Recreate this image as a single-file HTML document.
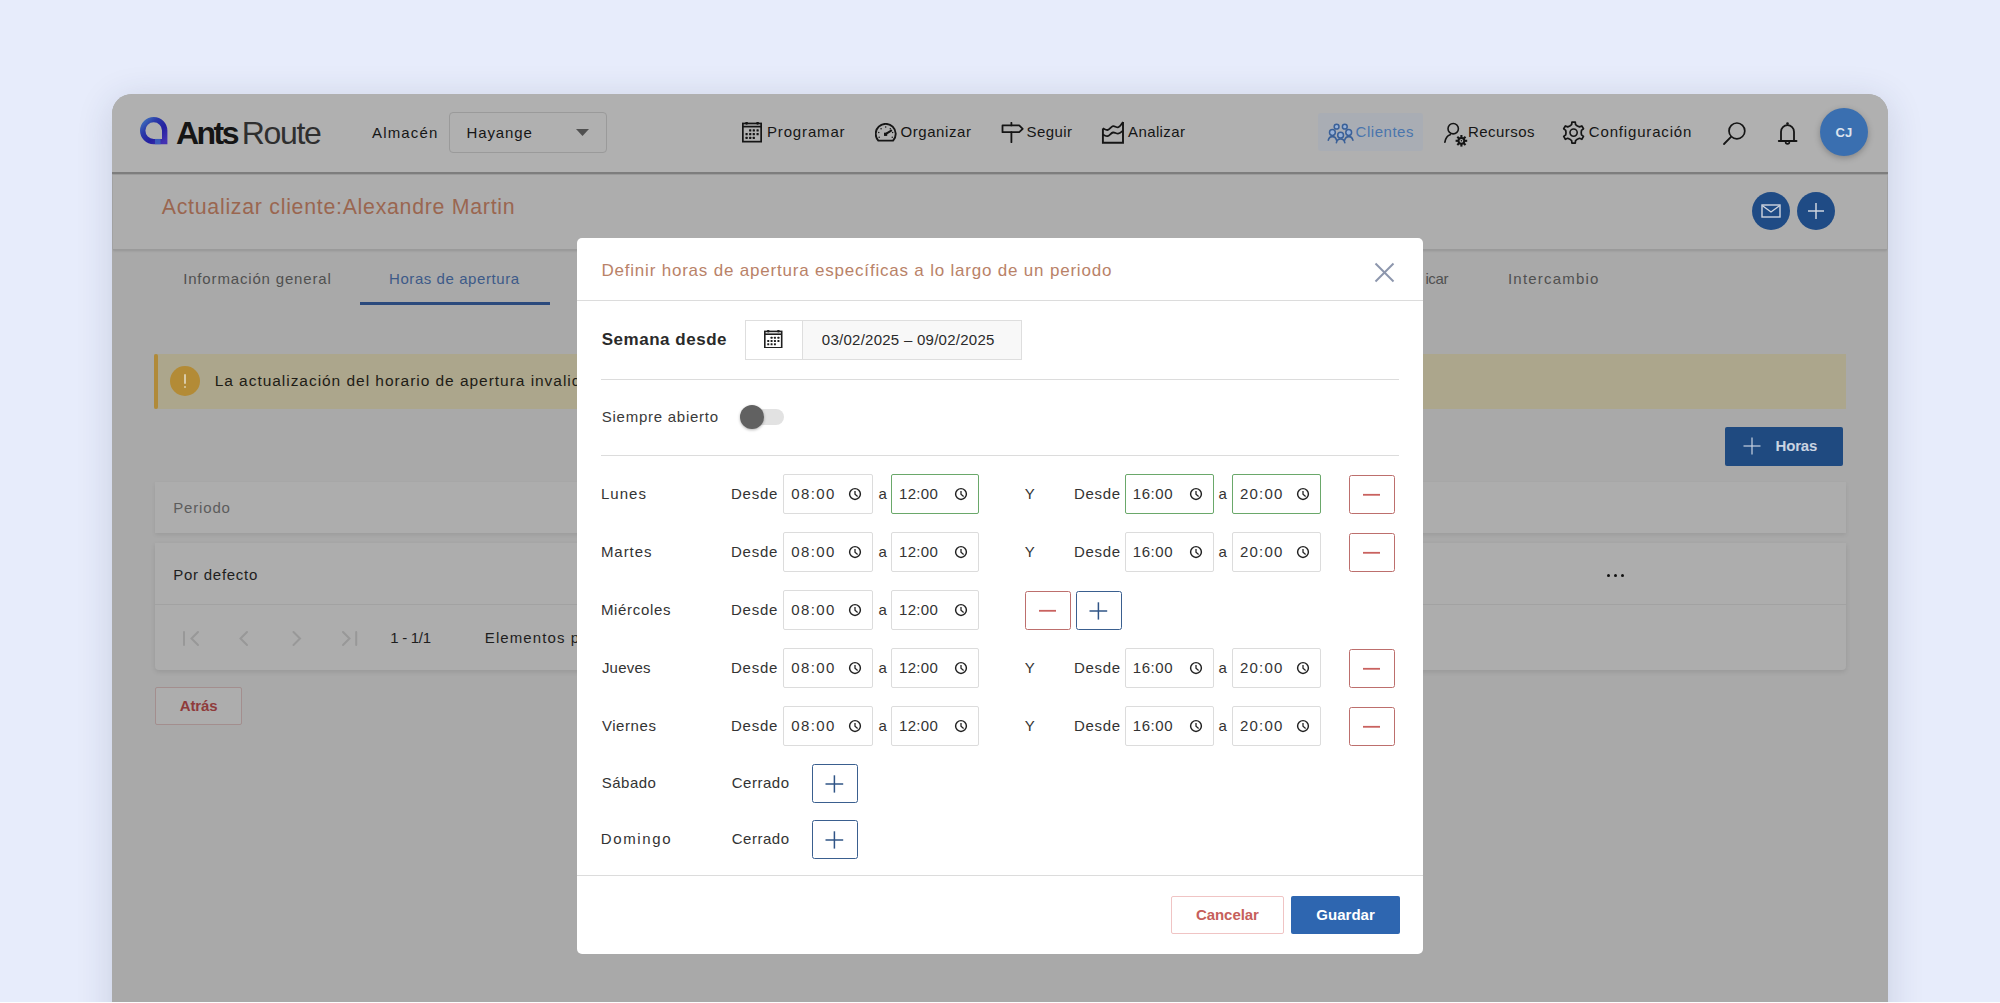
<!DOCTYPE html>
<html><head><meta charset="utf-8"><style>
html,body{margin:0;padding:0;}
body{width:2000px;height:1003px;overflow:hidden;position:relative;background:#e7ecfb;font-family:"Liberation Sans", sans-serif;}
.t{position:absolute;white-space:nowrap;line-height:1;}
.b{position:absolute;box-sizing:border-box;}
</style></head><body>
<div class="b" style="left:112px;top:94px;width:1776px;height:960px;border-radius:20px;background:#a9a9a9;box-shadow:0 6px 36px rgba(40,50,90,0.16);overflow:hidden">
<div class="b" style="left:0px;top:0px;width:1776px;height:78px;background:#b0b0b0"></div>
<div class="b" style="left:0px;top:78px;width:1776px;height:2px;background:#7d7d7d"></div>
<div class="b" style="left:0px;top:80px;width:1776px;height:1px;background:#9d9d9d"></div>
<div class="b" style="left:1px;top:81px;width:1774px;height:75px;background:#adadad;border-bottom:1px solid #9a9a9a;box-shadow:0 1px 2px rgba(0,0,0,0.12)"></div>
</div>
<svg class="b" style="left:138px;top:115px;" width="32" height="32" viewBox="0 0 32 32" fill="none"><defs><linearGradient id="lg" x1="0" y1="0" x2="1" y2="1"><stop offset="0" stop-color="#3f74bd"/><stop offset="0.3" stop-color="#2b3ba9"/><stop offset="0.65" stop-color="#2420a0"/><stop offset="1" stop-color="#4432b2"/></linearGradient></defs><path d="M4.7 15.6 A11 11 0 0 1 26.7 15.6 V26.6 H15.7 A11 11 0 0 1 4.7 15.6 Z" stroke="url(#lg)" stroke-width="5.4" stroke-linejoin="miter"/><path d="M17 26.6 H22.5" stroke="#3f6fc0" stroke-width="5.4" opacity="0.7"/></svg>
<div class="t" style="left:176.00px;top:117.41px;font-size:32px;font-weight:700;color:#151515;letter-spacing:-2.538px;">Ants</div>
<div class="t" style="left:241.70px;top:117.41px;font-size:32px;font-weight:400;color:#2f2f2f;letter-spacing:-1.323px;">Route</div>
<div class="t" style="left:372.00px;top:124.80px;font-size:15px;font-weight:400;color:#161616;letter-spacing:1.164px;">Almacén</div>
<div class="b" style="left:449px;top:112px;width:158px;height:41px;border:1px solid #9a9a9a;border-radius:4px;background:#b0b0b0"></div>
<div class="t" style="left:466.50px;top:124.80px;font-size:15px;font-weight:400;color:#161616;letter-spacing:0.900px;">Hayange</div>
<svg class="b" style="left:576px;top:129px;" width="13" height="8" viewBox="0 0 13 8" fill="none"><path d="M0 0 H13 L6.5 7 Z" fill="#505050"/></svg>
<svg class="b" style="left:742.3px;top:122.3px;" width="20" height="20.5" viewBox="0 0 20 20.5" fill="none"><rect x="0.85" y="1.45" width="18.30" height="18.20" stroke="#151515" stroke-width="1.7" fill="none"/><line x1="0.85" y1="4.61" x2="19.15" y2="4.61" stroke="#151515" stroke-width="1.7"/><circle cx="4.60" cy="1.25" r="1.44" fill="#151515"/><circle cx="15.60" cy="1.25" r="1.44" fill="#151515"/><rect x="7.10" y="7.30" width="2.20" height="2.20" rx="0.5" fill="#151515"/><rect x="10.70" y="7.30" width="2.20" height="2.20" rx="0.5" fill="#151515"/><rect x="14.50" y="7.30" width="2.20" height="2.20" rx="0.5" fill="#151515"/><rect x="3.50" y="10.99" width="2.20" height="2.20" rx="0.5" fill="#151515"/><rect x="7.10" y="10.99" width="2.20" height="2.20" rx="0.5" fill="#151515"/><rect x="10.70" y="10.99" width="2.20" height="2.20" rx="0.5" fill="#151515"/><rect x="14.50" y="10.99" width="2.20" height="2.20" rx="0.5" fill="#151515"/><rect x="3.50" y="14.69" width="2.20" height="2.20" rx="0.5" fill="#151515"/><rect x="7.10" y="14.69" width="2.20" height="2.20" rx="0.5" fill="#151515"/><rect x="10.70" y="14.69" width="2.20" height="2.20" rx="0.5" fill="#151515"/></svg>
<div class="t" style="left:767.00px;top:124.40px;font-size:15px;font-weight:400;color:#161616;letter-spacing:0.843px;">Programar</div>
<svg class="b" style="left:874.5px;top:123px;" width="22" height="20" viewBox="0 0 22 20" fill="none"><path d="M3.3 17.6 A10 10 0 1 1 18.1 17.6 Z" stroke="#151515" stroke-width="1.9" stroke-linejoin="round" fill="none"/><line x1="10.5" y1="11.2" x2="16.2" y2="7.6" stroke="#151515" stroke-width="2" stroke-linecap="round"/><rect x="9" y="9.7" width="3.2" height="3.2" fill="#151515"/><circle cx="4.17" cy="14.34" r="0.75" fill="#151515"/><circle cx="3.75" cy="9.44" r="0.75" fill="#151515"/><circle cx="6.07" cy="5.78" r="0.75" fill="#151515"/><circle cx="10.70" cy="4.10" r="0.75" fill="#151515"/><circle cx="15.33" cy="5.78" r="0.75" fill="#151515"/><circle cx="17.65" cy="9.44" r="0.75" fill="#151515"/><circle cx="17.23" cy="14.34" r="0.75" fill="#151515"/></svg>
<div class="t" style="left:900.40px;top:124.40px;font-size:15px;font-weight:400;color:#161616;letter-spacing:0.592px;">Organizar</div>
<svg class="b" style="left:1001px;top:122px;" width="23" height="21" viewBox="0 0 23 21" fill="none"><path d="M1.5 3.4 H18.2 L21.7 6.8 L18.2 10.2 H1.5 Z" stroke="#151515" stroke-width="1.8" stroke-linejoin="round" fill="none"/><line x1="10.4" y1="0.8" x2="10.4" y2="3.4" stroke="#151515" stroke-width="1.8" stroke-linecap="round"/><line x1="10.4" y1="10.2" x2="10.4" y2="20.2" stroke="#151515" stroke-width="1.8" stroke-linecap="round"/></svg>
<div class="t" style="left:1026.60px;top:124.40px;font-size:15px;font-weight:400;color:#161616;letter-spacing:0.407px;">Seguir</div>
<svg class="b" style="left:1101px;top:121px;" width="24" height="23" viewBox="0 0 24 23" fill="none"><path d="M1.9 7.4 V21.8 H22 V1" stroke="#151515" stroke-width="1.9" stroke-linejoin="miter" fill="none"/><path d="M1.9 7.4 C4 8.4 5 9.2 6.5 9 C8.5 8.7 10 5.5 12 5.2 C14 5 15 6.4 17 6.3 C19 6.2 20.5 3 22 1" stroke="#151515" stroke-width="1.8" fill="none"/><path d="M1.9 13.6 C4 14.6 5 15.4 6.5 15.2 C8.5 14.9 10 11.8 12 11.5 C14 11.3 15 12.7 17 12.6 C19 12.5 20.5 10.8 22 9.6" stroke="#151515" stroke-width="1.8" fill="none"/></svg>
<div class="t" style="left:1128.00px;top:124.40px;font-size:15px;font-weight:400;color:#161616;letter-spacing:0.400px;">Analizar</div>
<div class="b" style="left:1318px;top:113px;width:105px;height:38px;background:#a9adb4;border-radius:3px"></div>
<svg class="b" style="left:1326px;top:122px;" width="29" height="22" viewBox="0 0 29 22" fill="none"><path d="M2.30 18.20 C3.30 13.40 9.50 13.40 10.50 18.20" stroke="#3a6098" stroke-width="1.6" fill="none" stroke-linecap="round"/><path d="M18.70 18.20 C19.70 13.40 25.90 13.40 26.90 18.20" stroke="#3a6098" stroke-width="1.6" fill="none" stroke-linecap="round"/><path d="M10.40 20.60 C11.40 15.80 17.80 15.80 18.80 20.60" stroke="#3a6098" stroke-width="1.6" fill="none" stroke-linecap="round"/><circle cx="10.60" cy="4.70" r="2.40" stroke="#3a6098" stroke-width="1.5" fill="#98b2d8"/><circle cx="18.80" cy="4.70" r="2.40" stroke="#3a6098" stroke-width="1.5" fill="#98b2d8"/><circle cx="6.40" cy="10.50" r="2.90" stroke="#3a6098" stroke-width="1.5" fill="#98b2d8"/><circle cx="22.70" cy="10.50" r="2.90" stroke="#3a6098" stroke-width="1.5" fill="#98b2d8"/><circle cx="14.60" cy="13.20" r="2.90" stroke="#3a6098" stroke-width="1.5" fill="#98b2d8"/></svg>
<div class="t" style="left:1355.60px;top:124.40px;font-size:15px;font-weight:400;color:#4a75ad;letter-spacing:0.530px;">Clientes</div>
<svg class="b" style="left:1444px;top:122px;" width="25" height="26" viewBox="0 0 25 26" fill="none"><circle cx="9.2" cy="6.7" r="5.2" stroke="#151515" stroke-width="1.6" fill="none"/><path d="M6.2 12.7 C3 13.5 1.5 16.5 0.9 20.2" stroke="#151515" stroke-width="1.7" fill="none" stroke-linecap="round"/><g stroke="#151515" stroke-width="2.1"><line x1="20.40" y1="18.80" x2="23.20" y2="18.80"/><line x1="19.52" y1="20.92" x2="21.50" y2="22.90"/><line x1="17.40" y1="21.80" x2="17.40" y2="24.60"/><line x1="15.28" y1="20.92" x2="13.30" y2="22.90"/><line x1="14.40" y1="18.80" x2="11.60" y2="18.80"/><line x1="15.28" y1="16.68" x2="13.30" y2="14.70"/><line x1="17.40" y1="15.80" x2="17.40" y2="13.00"/><line x1="19.52" y1="16.68" x2="21.50" y2="14.70"/></g><circle cx="17.40" cy="18.80" r="2.9" stroke="#151515" stroke-width="2" fill="none"/><circle cx="17.40" cy="18.80" r="0.8" fill="#151515"/></svg>
<div class="t" style="left:1468.00px;top:124.40px;font-size:15px;font-weight:400;color:#161616;letter-spacing:0.449px;">Recursos</div>
<svg class="b" style="left:1562px;top:121px;" width="24" height="24" viewBox="0 0 24 24" fill="none"><path d="M7.80 5.02 L9.62 3.64 L9.94 1.13 L13.26 1.13 L13.58 3.64 L15.40 5.02 L17.50 5.90 L19.84 4.93 L21.50 7.80 L19.48 9.34 L19.20 11.60 L19.48 13.86 L21.50 15.40 L19.84 18.27 L17.50 17.30 L15.40 18.18 L13.58 19.56 L13.26 22.07 L9.94 22.07 L9.62 19.56 L7.80 18.18 L5.70 17.30 L3.36 18.27 L1.70 15.40 L3.72 13.86 L4.00 11.60 L3.72 9.34 L1.70 7.80 L3.36 4.93 L5.70 5.90 Z" stroke="#151515" stroke-width="1.7" stroke-linejoin="round" fill="none"/><circle cx="11.60" cy="11.60" r="3.6" stroke="#151515" stroke-width="1.6" fill="none"/></svg>
<div class="t" style="left:1588.80px;top:124.40px;font-size:15px;font-weight:400;color:#161616;letter-spacing:0.832px;">Configuración</div>
<svg class="b" style="left:1722px;top:121px;" width="26" height="26" viewBox="0 0 26 26" fill="none"><circle cx="14.9" cy="9.9" r="7.9" stroke="#151515" stroke-width="1.7" fill="none"/><line x1="9" y1="15.8" x2="2" y2="23" stroke="#151515" stroke-width="1.8" stroke-linecap="round"/></svg>
<svg class="b" style="left:1777px;top:121px;" width="22" height="25" viewBox="0 0 22 25" fill="none"><path d="M4 20 V10.7 A6.5 6.5 0 0 1 17 10.7 V20" stroke="#151515" stroke-width="1.8" fill="none"/><line x1="1.8" y1="20" x2="19.5" y2="20" stroke="#151515" stroke-width="1.9" stroke-linecap="round"/><circle cx="10.5" cy="2.6" r="1.3" fill="#151515"/><path d="M8.6 21 A1.9 1.9 0 0 0 12.4 21" stroke="#151515" stroke-width="1.6" fill="none"/></svg>
<div class="b" style="left:1820px;top:108px;width:48px;height:48px;border-radius:50%;background:#3a6fb0;box-shadow:0 2px 6px rgba(0,0,0,0.25)"></div>
<div class="t" style="left:1835.50px;top:125.50px;font-size:13px;font-weight:700;color:#dde4ee;letter-spacing:0.112px;">CJ</div>
<div class="t" style="left:161.80px;top:196.77px;font-size:21.3px;font-weight:400;color:#9a6650;letter-spacing:0.734px;">Actualizar cliente:Alexandre Martin</div>
<div class="b" style="left:1752px;top:192px;width:38px;height:38px;border-radius:50%;background:#1f4b85"></div>
<svg class="b" style="left:1761px;top:204px;" width="20" height="14" viewBox="0 0 20 14" fill="none"><rect x="1" y="1" width="18" height="12" stroke="#cfd5df" stroke-width="1.4" fill="none"/><path d="M1.5 1.8 L10 8 L18.5 1.8" stroke="#cfd5df" stroke-width="1.4" fill="none"/></svg>
<div class="b" style="left:1797px;top:192px;width:38px;height:38px;border-radius:50%;background:#1f4b85"></div>
<svg class="b" style="left:1806px;top:201px;" width="20" height="20" viewBox="0 0 20 20" fill="none"><line x1="10" y1="2" x2="10" y2="18" stroke="#cfd5df" stroke-width="1.5"/><line x1="2" y1="10" x2="18" y2="10" stroke="#cfd5df" stroke-width="1.5"/></svg>
<div class="t" style="left:183.20px;top:271.00px;font-size:15px;font-weight:400;color:#505050;letter-spacing:0.836px;">Información general</div>
<div class="t" style="left:389.00px;top:271.00px;font-size:15px;font-weight:400;color:#3d5a88;letter-spacing:0.571px;">Horas de apertura</div>
<div class="b" style="left:360px;top:302px;width:190px;height:3px;background:#2b4a7d"></div>
<div class="t" style="left:1425.40px;top:271.00px;font-size:15px;font-weight:400;color:#505050;letter-spacing:-0.358px;">icar</div>
<div class="t" style="left:1508.00px;top:271.00px;font-size:15px;font-weight:400;color:#505050;letter-spacing:1.197px;">Intercambio</div>
<div class="b" style="left:154px;top:354px;width:1692px;height:55px;background:#aca68c"></div>
<div class="b" style="left:154px;top:353.5px;width:4.3px;height:55.5px;background:#b08a3a;border-radius:2px"></div>
<div class="b" style="left:170px;top:366px;width:30px;height:30px;border-radius:50%;background:#b38b36"></div>
<div class="b" style="left:183.8px;top:373.8px;width:2.6px;height:10px;background:#d9cba8;border-radius:1.2px"></div>
<div class="b" style="left:183.9px;top:385.8px;width:2.4px;height:2.4px;background:#d9cba8;border-radius:1px"></div>
<div class="t" style="left:214.70px;top:372.58px;font-size:15.5px;font-weight:400;color:#1e1c16;letter-spacing:0.960px;">La actualización del horario de apertura invalida</div>
<div class="b" style="left:1725px;top:427px;width:118px;height:39px;background:#1f4a80;border-radius:2px"></div>
<svg class="b" style="left:1742px;top:436px;" width="20" height="20" viewBox="0 0 20 20" fill="none"><line x1="10" y1="1.5" x2="10" y2="18.5" stroke="#c9d3e1" stroke-width="1.2"/><line x1="1.5" y1="10" x2="18.5" y2="10" stroke="#c9d3e1" stroke-width="1.2"/></svg>
<div class="t" style="left:1775.60px;top:438.30px;font-size:15px;font-weight:700;color:#cad4e2;letter-spacing:-0.194px;">Horas</div>
<div class="b" style="left:155px;top:482px;width:1691px;height:51px;background:#adadad;box-shadow:0 2px 4px rgba(0,0,0,0.08)"></div>
<div class="t" style="left:173.30px;top:499.50px;font-size:15px;font-weight:400;color:#5c5c5c;letter-spacing:0.823px;">Periodo</div>
<div class="b" style="left:155px;top:543px;width:1691px;height:127px;background:#adadad;box-shadow:0 2px 5px rgba(0,0,0,0.10);border-radius:0 0 4px 4px"></div>
<div class="b" style="left:155px;top:604px;width:1691px;height:1px;background:#a2a2a2"></div>
<div class="t" style="left:173.30px;top:566.80px;font-size:15px;font-weight:400;color:#1e1e1e;letter-spacing:0.733px;">Por defecto</div>
<div class="b" style="left:1606.7px;top:573.7px;width:18px;height:4px"><div class="b" style="left:0px;top:0;width:3px;height:3px;border-radius:50%;background:#111"></div><div class="b" style="left:7px;top:0;width:3px;height:3px;border-radius:50%;background:#111"></div><div class="b" style="left:14px;top:0;width:3px;height:3px;border-radius:50%;background:#111"></div></div>
<svg class="b" style="left:180px;top:628px;" width="22" height="20" viewBox="0 0 22 20" fill="none"><line x1="4" y1="4" x2="4" y2="17" stroke="#989898" stroke-width="2" fill="none" stroke-linecap="round"/><path d="M18 4 L11.5 10.5 L18 17" stroke="#989898" stroke-width="2" fill="none" stroke-linecap="round"/></svg>
<svg class="b" style="left:236px;top:628px;" width="14" height="20" viewBox="0 0 14 20" fill="none"><path d="M11 4 L4.5 10.5 L11 17" stroke="#989898" stroke-width="2" fill="none" stroke-linecap="round"/></svg>
<svg class="b" style="left:290px;top:628px;" width="14" height="20" viewBox="0 0 14 20" fill="none"><path d="M3.5 4 L10 10.5 L3.5 17" stroke="#989898" stroke-width="2" fill="none" stroke-linecap="round"/></svg>
<svg class="b" style="left:339px;top:628px;" width="22" height="20" viewBox="0 0 22 20" fill="none"><path d="M4 4 L10.5 10.5 L4 17" stroke="#989898" stroke-width="2" fill="none" stroke-linecap="round"/><line x1="17.2" y1="4" x2="17.2" y2="17" stroke="#989898" stroke-width="2" fill="none" stroke-linecap="round"/></svg>
<div class="t" style="left:390.20px;top:629.80px;font-size:15px;font-weight:400;color:#1e1e1e;letter-spacing:-0.280px;">1 - 1/1</div>
<div class="t" style="left:484.80px;top:630.40px;font-size:15px;font-weight:400;color:#1e1e1e;letter-spacing:1.091px;">Elementos por</div>
<div class="b" style="left:155px;top:687px;width:87px;height:37.5px;border:1.2px solid #a38e8e;border-radius:2px;background:#adadad"></div>
<div class="t" style="left:179.80px;top:698.20px;font-size:15px;font-weight:700;color:#8f3b3b;letter-spacing:-0.152px;">Atrás</div>
<div class="b" style="left:577px;top:238px;width:846px;height:715.5px;background:#fff;border-radius:5px"></div>
<div class="t" style="left:601.40px;top:262.11px;font-size:17px;font-weight:400;color:#b98268;letter-spacing:0.801px;">Definir horas de apertura específicas a lo largo de un periodo</div>
<svg class="b" style="left:1374px;top:262px;" width="21" height="21" viewBox="0 0 21 21" fill="none"><line x1="1.5" y1="1.5" x2="19.5" y2="19.5" stroke="#8c96ad" stroke-width="2"/><line x1="19.5" y1="1.5" x2="1.5" y2="19.5" stroke="#8c96ad" stroke-width="2"/></svg>
<div class="b" style="left:577px;top:300px;width:846px;height:1px;background:#dcdcdc"></div>
<div class="t" style="left:601.70px;top:330.71px;font-size:17px;font-weight:700;color:#2a2a2a;letter-spacing:0.527px;">Semana desde</div>
<div class="b" style="left:745px;top:320px;width:277px;height:40px;border:1px solid #dedede;background:#f8f8f8"></div>
<div class="b" style="left:745px;top:320px;width:58px;height:40px;border:1px solid #dedede;background:#fff"></div>
<svg class="b" style="left:764.4px;top:329.9px;" width="18.5" height="18.6" viewBox="0 0 18.5 18.6" fill="none"><rect x="0.80" y="1.40" width="16.90" height="16.40" stroke="#1f1f1f" stroke-width="1.6" fill="none"/><line x1="0.80" y1="4.19" x2="17.70" y2="4.19" stroke="#1f1f1f" stroke-width="1.6"/><circle cx="4.25" cy="1.20" r="1.36" fill="#1f1f1f"/><circle cx="14.43" cy="1.20" r="1.36" fill="#1f1f1f"/><rect x="6.58" y="6.63" width="2.00" height="2.00" rx="0.5" fill="#1f1f1f"/><rect x="9.91" y="6.63" width="2.00" height="2.00" rx="0.5" fill="#1f1f1f"/><rect x="13.43" y="6.63" width="2.00" height="2.00" rx="0.5" fill="#1f1f1f"/><rect x="3.25" y="9.97" width="2.00" height="2.00" rx="0.5" fill="#1f1f1f"/><rect x="6.58" y="9.97" width="2.00" height="2.00" rx="0.5" fill="#1f1f1f"/><rect x="9.91" y="9.97" width="2.00" height="2.00" rx="0.5" fill="#1f1f1f"/><rect x="13.43" y="9.97" width="2.00" height="2.00" rx="0.5" fill="#1f1f1f"/><rect x="3.25" y="13.32" width="2.00" height="2.00" rx="0.5" fill="#1f1f1f"/><rect x="6.58" y="13.32" width="2.00" height="2.00" rx="0.5" fill="#1f1f1f"/><rect x="9.91" y="13.32" width="2.00" height="2.00" rx="0.5" fill="#1f1f1f"/></svg>
<div class="t" style="left:821.80px;top:332.10px;font-size:15px;font-weight:400;color:#2a2a2a;letter-spacing:0.260px;">03/02/2025 – 09/02/2025</div>
<div class="b" style="left:601px;top:379px;width:798px;height:1px;background:#dcdcdc"></div>
<div class="t" style="left:601.70px;top:408.80px;font-size:15px;font-weight:400;color:#3a3a3a;letter-spacing:0.754px;">Siempre abierto</div>
<div class="b" style="left:745px;top:409px;width:39px;height:16px;background:#e2e2e2;border-radius:8px"></div>
<div class="b" style="left:740px;top:405px;width:24px;height:24px;background:#616161;border-radius:50%;box-shadow:0 1px 3px rgba(0,0,0,0.3)"></div>
<div class="b" style="left:601px;top:455px;width:798px;height:1px;background:#dcdcdc"></div>
<div class="t" style="left:600.90px;top:486.00px;font-size:15px;font-weight:400;color:#333333;letter-spacing:1.033px;">Lunes</div>
<div class="t" style="left:731.00px;top:486.00px;font-size:15px;font-weight:400;color:#333333;letter-spacing:0.746px;">Desde</div>
<div class="b" style="left:783px;top:474px;width:90px;height:40px;border:1px solid #dcdcdc;border-radius:2px;background:#fff"></div><div class="t" style="left:791.30px;top:486.00px;font-size:15px;font-weight:400;color:#333333;letter-spacing:1.376px;">08:00</div><svg class="b" style="left:847.6px;top:487.25px;" width="14" height="14" viewBox="0 0 14 14" fill="none"><circle cx="7" cy="7" r="5.4" stroke="#222" stroke-width="1.45" fill="none"/><path d="M7 4 V7.2 L9.6 9.4" stroke="#222" stroke-width="1.3" fill="none"/></svg>
<div class="t" style="left:878.60px;top:486.00px;font-size:15px;font-weight:400;color:#333333;letter-spacing:-2.000px;">a</div>
<div class="b" style="left:891px;top:474px;width:88px;height:40px;border:1px solid #6aa86a;border-radius:2px;background:#fff"></div><div class="t" style="left:899.00px;top:486.00px;font-size:15px;font-weight:400;color:#333333;letter-spacing:0.326px;">12:00</div><svg class="b" style="left:953.6px;top:487.25px;" width="14" height="14" viewBox="0 0 14 14" fill="none"><circle cx="7" cy="7" r="5.4" stroke="#222" stroke-width="1.45" fill="none"/><path d="M7 4 V7.2 L9.6 9.4" stroke="#222" stroke-width="1.3" fill="none"/></svg>
<div class="t" style="left:1024.80px;top:486.00px;font-size:15px;font-weight:400;color:#333333;letter-spacing:-1.200px;">Y</div>
<div class="t" style="left:1074.00px;top:486.00px;font-size:15px;font-weight:400;color:#333333;letter-spacing:0.671px;">Desde</div>
<div class="b" style="left:1125px;top:474px;width:89px;height:40px;border:1px solid #6aa86a;border-radius:2px;background:#fff"></div><div class="t" style="left:1132.80px;top:486.00px;font-size:15px;font-weight:400;color:#333333;letter-spacing:0.551px;">16:00</div><svg class="b" style="left:1188.6px;top:487.25px;" width="14" height="14" viewBox="0 0 14 14" fill="none"><circle cx="7" cy="7" r="5.4" stroke="#222" stroke-width="1.45" fill="none"/><path d="M7 4 V7.2 L9.6 9.4" stroke="#222" stroke-width="1.3" fill="none"/></svg>
<div class="t" style="left:1218.40px;top:486.00px;font-size:15px;font-weight:400;color:#333333;letter-spacing:-1.200px;">a</div>
<div class="b" style="left:1232px;top:474px;width:89px;height:40px;border:1px solid #6aa86a;border-radius:2px;background:#fff"></div><div class="t" style="left:1240.00px;top:486.00px;font-size:15px;font-weight:400;color:#333333;letter-spacing:1.201px;">20:00</div><svg class="b" style="left:1295.6px;top:487.25px;" width="14" height="14" viewBox="0 0 14 14" fill="none"><circle cx="7" cy="7" r="5.4" stroke="#222" stroke-width="1.45" fill="none"/><path d="M7 4 V7.2 L9.6 9.4" stroke="#222" stroke-width="1.3" fill="none"/></svg>
<div class="b" style="left:1349px;top:475px;width:45.5px;height:38.5px;border:1.3px solid #bd6f6d;border-radius:2.5px"></div><svg class="b" style="left:1349px;top:475px;" width="46" height="39" viewBox="0 0 46 39" fill="none"><line x1="14" y1="19.8" x2="31" y2="19.8" stroke="#c9625f" stroke-width="1.8"/></svg>
<div class="t" style="left:600.90px;top:544.00px;font-size:15px;font-weight:400;color:#333333;letter-spacing:0.952px;">Martes</div>
<div class="t" style="left:731.00px;top:544.00px;font-size:15px;font-weight:400;color:#333333;letter-spacing:0.746px;">Desde</div>
<div class="b" style="left:783px;top:532px;width:90px;height:40px;border:1px solid #dcdcdc;border-radius:2px;background:#fff"></div><div class="t" style="left:791.30px;top:544.00px;font-size:15px;font-weight:400;color:#333333;letter-spacing:1.376px;">08:00</div><svg class="b" style="left:847.6px;top:545.25px;" width="14" height="14" viewBox="0 0 14 14" fill="none"><circle cx="7" cy="7" r="5.4" stroke="#222" stroke-width="1.45" fill="none"/><path d="M7 4 V7.2 L9.6 9.4" stroke="#222" stroke-width="1.3" fill="none"/></svg>
<div class="t" style="left:878.60px;top:544.00px;font-size:15px;font-weight:400;color:#333333;letter-spacing:-2.000px;">a</div>
<div class="b" style="left:891px;top:532px;width:88px;height:40px;border:1px solid #dcdcdc;border-radius:2px;background:#fff"></div><div class="t" style="left:899.00px;top:544.00px;font-size:15px;font-weight:400;color:#333333;letter-spacing:0.326px;">12:00</div><svg class="b" style="left:953.6px;top:545.25px;" width="14" height="14" viewBox="0 0 14 14" fill="none"><circle cx="7" cy="7" r="5.4" stroke="#222" stroke-width="1.45" fill="none"/><path d="M7 4 V7.2 L9.6 9.4" stroke="#222" stroke-width="1.3" fill="none"/></svg>
<div class="t" style="left:1024.80px;top:544.00px;font-size:15px;font-weight:400;color:#333333;letter-spacing:-1.200px;">Y</div>
<div class="t" style="left:1074.00px;top:544.00px;font-size:15px;font-weight:400;color:#333333;letter-spacing:0.671px;">Desde</div>
<div class="b" style="left:1125px;top:532px;width:89px;height:40px;border:1px solid #dcdcdc;border-radius:2px;background:#fff"></div><div class="t" style="left:1132.80px;top:544.00px;font-size:15px;font-weight:400;color:#333333;letter-spacing:0.551px;">16:00</div><svg class="b" style="left:1188.6px;top:545.25px;" width="14" height="14" viewBox="0 0 14 14" fill="none"><circle cx="7" cy="7" r="5.4" stroke="#222" stroke-width="1.45" fill="none"/><path d="M7 4 V7.2 L9.6 9.4" stroke="#222" stroke-width="1.3" fill="none"/></svg>
<div class="t" style="left:1218.40px;top:544.00px;font-size:15px;font-weight:400;color:#333333;letter-spacing:-1.200px;">a</div>
<div class="b" style="left:1232px;top:532px;width:89px;height:40px;border:1px solid #dcdcdc;border-radius:2px;background:#fff"></div><div class="t" style="left:1240.00px;top:544.00px;font-size:15px;font-weight:400;color:#333333;letter-spacing:1.201px;">20:00</div><svg class="b" style="left:1295.6px;top:545.25px;" width="14" height="14" viewBox="0 0 14 14" fill="none"><circle cx="7" cy="7" r="5.4" stroke="#222" stroke-width="1.45" fill="none"/><path d="M7 4 V7.2 L9.6 9.4" stroke="#222" stroke-width="1.3" fill="none"/></svg>
<div class="b" style="left:1349px;top:533px;width:45.5px;height:38.5px;border:1.3px solid #bd6f6d;border-radius:2.5px"></div><svg class="b" style="left:1349px;top:533px;" width="46" height="39" viewBox="0 0 46 39" fill="none"><line x1="14" y1="19.8" x2="31" y2="19.8" stroke="#c9625f" stroke-width="1.8"/></svg>
<div class="t" style="left:600.90px;top:602.00px;font-size:15px;font-weight:400;color:#333333;letter-spacing:0.677px;">Miércoles</div>
<div class="t" style="left:731.00px;top:602.00px;font-size:15px;font-weight:400;color:#333333;letter-spacing:0.746px;">Desde</div>
<div class="b" style="left:783px;top:590px;width:90px;height:40px;border:1px solid #dcdcdc;border-radius:2px;background:#fff"></div><div class="t" style="left:791.30px;top:602.00px;font-size:15px;font-weight:400;color:#333333;letter-spacing:1.376px;">08:00</div><svg class="b" style="left:847.6px;top:603.25px;" width="14" height="14" viewBox="0 0 14 14" fill="none"><circle cx="7" cy="7" r="5.4" stroke="#222" stroke-width="1.45" fill="none"/><path d="M7 4 V7.2 L9.6 9.4" stroke="#222" stroke-width="1.3" fill="none"/></svg>
<div class="t" style="left:878.60px;top:602.00px;font-size:15px;font-weight:400;color:#333333;letter-spacing:-2.000px;">a</div>
<div class="b" style="left:891px;top:590px;width:88px;height:40px;border:1px solid #dcdcdc;border-radius:2px;background:#fff"></div><div class="t" style="left:899.00px;top:602.00px;font-size:15px;font-weight:400;color:#333333;letter-spacing:0.326px;">12:00</div><svg class="b" style="left:953.6px;top:603.25px;" width="14" height="14" viewBox="0 0 14 14" fill="none"><circle cx="7" cy="7" r="5.4" stroke="#222" stroke-width="1.45" fill="none"/><path d="M7 4 V7.2 L9.6 9.4" stroke="#222" stroke-width="1.3" fill="none"/></svg>
<div class="b" style="left:1025.2px;top:591.3px;width:45.5px;height:38.5px;border:1.3px solid #bd6f6d;border-radius:2.5px"></div><svg class="b" style="left:1025.2px;top:591.3px;" width="46" height="39" viewBox="0 0 46 39" fill="none"><line x1="14" y1="19.8" x2="31" y2="19.8" stroke="#c9625f" stroke-width="1.8"/></svg>
<div class="b" style="left:1076.1px;top:591.3px;width:45.5px;height:38.5px;border:1.3px solid #3a5f8f;border-radius:2.5px"></div><svg class="b" style="left:1076.1px;top:591.3px;" width="46" height="39" viewBox="0 0 46 39" fill="none"><line x1="13.5" y1="20" x2="31.2" y2="20" stroke="#2f5486" stroke-width="1.5"/><line x1="22.4" y1="11.3" x2="22.4" y2="28.6" stroke="#2f5486" stroke-width="1.5"/></svg>
<div class="t" style="left:601.90px;top:660.00px;font-size:15px;font-weight:400;color:#333333;letter-spacing:0.215px;">Jueves</div>
<div class="t" style="left:731.00px;top:660.00px;font-size:15px;font-weight:400;color:#333333;letter-spacing:0.746px;">Desde</div>
<div class="b" style="left:783px;top:648px;width:90px;height:40px;border:1px solid #dcdcdc;border-radius:2px;background:#fff"></div><div class="t" style="left:791.30px;top:660.00px;font-size:15px;font-weight:400;color:#333333;letter-spacing:1.376px;">08:00</div><svg class="b" style="left:847.6px;top:661.25px;" width="14" height="14" viewBox="0 0 14 14" fill="none"><circle cx="7" cy="7" r="5.4" stroke="#222" stroke-width="1.45" fill="none"/><path d="M7 4 V7.2 L9.6 9.4" stroke="#222" stroke-width="1.3" fill="none"/></svg>
<div class="t" style="left:878.60px;top:660.00px;font-size:15px;font-weight:400;color:#333333;letter-spacing:-2.000px;">a</div>
<div class="b" style="left:891px;top:648px;width:88px;height:40px;border:1px solid #dcdcdc;border-radius:2px;background:#fff"></div><div class="t" style="left:899.00px;top:660.00px;font-size:15px;font-weight:400;color:#333333;letter-spacing:0.326px;">12:00</div><svg class="b" style="left:953.6px;top:661.25px;" width="14" height="14" viewBox="0 0 14 14" fill="none"><circle cx="7" cy="7" r="5.4" stroke="#222" stroke-width="1.45" fill="none"/><path d="M7 4 V7.2 L9.6 9.4" stroke="#222" stroke-width="1.3" fill="none"/></svg>
<div class="t" style="left:1024.80px;top:660.00px;font-size:15px;font-weight:400;color:#333333;letter-spacing:-1.200px;">Y</div>
<div class="t" style="left:1074.00px;top:660.00px;font-size:15px;font-weight:400;color:#333333;letter-spacing:0.671px;">Desde</div>
<div class="b" style="left:1125px;top:648px;width:89px;height:40px;border:1px solid #dcdcdc;border-radius:2px;background:#fff"></div><div class="t" style="left:1132.80px;top:660.00px;font-size:15px;font-weight:400;color:#333333;letter-spacing:0.551px;">16:00</div><svg class="b" style="left:1188.6px;top:661.25px;" width="14" height="14" viewBox="0 0 14 14" fill="none"><circle cx="7" cy="7" r="5.4" stroke="#222" stroke-width="1.45" fill="none"/><path d="M7 4 V7.2 L9.6 9.4" stroke="#222" stroke-width="1.3" fill="none"/></svg>
<div class="t" style="left:1218.40px;top:660.00px;font-size:15px;font-weight:400;color:#333333;letter-spacing:-1.200px;">a</div>
<div class="b" style="left:1232px;top:648px;width:89px;height:40px;border:1px solid #dcdcdc;border-radius:2px;background:#fff"></div><div class="t" style="left:1240.00px;top:660.00px;font-size:15px;font-weight:400;color:#333333;letter-spacing:1.201px;">20:00</div><svg class="b" style="left:1295.6px;top:661.25px;" width="14" height="14" viewBox="0 0 14 14" fill="none"><circle cx="7" cy="7" r="5.4" stroke="#222" stroke-width="1.45" fill="none"/><path d="M7 4 V7.2 L9.6 9.4" stroke="#222" stroke-width="1.3" fill="none"/></svg>
<div class="b" style="left:1349px;top:649px;width:45.5px;height:38.5px;border:1.3px solid #bd6f6d;border-radius:2.5px"></div><svg class="b" style="left:1349px;top:649px;" width="46" height="39" viewBox="0 0 46 39" fill="none"><line x1="14" y1="19.8" x2="31" y2="19.8" stroke="#c9625f" stroke-width="1.8"/></svg>
<div class="t" style="left:601.90px;top:718.00px;font-size:15px;font-weight:400;color:#333333;letter-spacing:0.569px;">Viernes</div>
<div class="t" style="left:731.00px;top:718.00px;font-size:15px;font-weight:400;color:#333333;letter-spacing:0.746px;">Desde</div>
<div class="b" style="left:783px;top:706px;width:90px;height:40px;border:1px solid #dcdcdc;border-radius:2px;background:#fff"></div><div class="t" style="left:791.30px;top:718.00px;font-size:15px;font-weight:400;color:#333333;letter-spacing:1.376px;">08:00</div><svg class="b" style="left:847.6px;top:719.25px;" width="14" height="14" viewBox="0 0 14 14" fill="none"><circle cx="7" cy="7" r="5.4" stroke="#222" stroke-width="1.45" fill="none"/><path d="M7 4 V7.2 L9.6 9.4" stroke="#222" stroke-width="1.3" fill="none"/></svg>
<div class="t" style="left:878.60px;top:718.00px;font-size:15px;font-weight:400;color:#333333;letter-spacing:-2.000px;">a</div>
<div class="b" style="left:891px;top:706px;width:88px;height:40px;border:1px solid #dcdcdc;border-radius:2px;background:#fff"></div><div class="t" style="left:899.00px;top:718.00px;font-size:15px;font-weight:400;color:#333333;letter-spacing:0.326px;">12:00</div><svg class="b" style="left:953.6px;top:719.25px;" width="14" height="14" viewBox="0 0 14 14" fill="none"><circle cx="7" cy="7" r="5.4" stroke="#222" stroke-width="1.45" fill="none"/><path d="M7 4 V7.2 L9.6 9.4" stroke="#222" stroke-width="1.3" fill="none"/></svg>
<div class="t" style="left:1024.80px;top:718.00px;font-size:15px;font-weight:400;color:#333333;letter-spacing:-1.200px;">Y</div>
<div class="t" style="left:1074.00px;top:718.00px;font-size:15px;font-weight:400;color:#333333;letter-spacing:0.671px;">Desde</div>
<div class="b" style="left:1125px;top:706px;width:89px;height:40px;border:1px solid #dcdcdc;border-radius:2px;background:#fff"></div><div class="t" style="left:1132.80px;top:718.00px;font-size:15px;font-weight:400;color:#333333;letter-spacing:0.551px;">16:00</div><svg class="b" style="left:1188.6px;top:719.25px;" width="14" height="14" viewBox="0 0 14 14" fill="none"><circle cx="7" cy="7" r="5.4" stroke="#222" stroke-width="1.45" fill="none"/><path d="M7 4 V7.2 L9.6 9.4" stroke="#222" stroke-width="1.3" fill="none"/></svg>
<div class="t" style="left:1218.40px;top:718.00px;font-size:15px;font-weight:400;color:#333333;letter-spacing:-1.200px;">a</div>
<div class="b" style="left:1232px;top:706px;width:89px;height:40px;border:1px solid #dcdcdc;border-radius:2px;background:#fff"></div><div class="t" style="left:1240.00px;top:718.00px;font-size:15px;font-weight:400;color:#333333;letter-spacing:1.201px;">20:00</div><svg class="b" style="left:1295.6px;top:719.25px;" width="14" height="14" viewBox="0 0 14 14" fill="none"><circle cx="7" cy="7" r="5.4" stroke="#222" stroke-width="1.45" fill="none"/><path d="M7 4 V7.2 L9.6 9.4" stroke="#222" stroke-width="1.3" fill="none"/></svg>
<div class="b" style="left:1349px;top:707px;width:45.5px;height:38.5px;border:1.3px solid #bd6f6d;border-radius:2.5px"></div><svg class="b" style="left:1349px;top:707px;" width="46" height="39" viewBox="0 0 46 39" fill="none"><line x1="14" y1="19.8" x2="31" y2="19.8" stroke="#c9625f" stroke-width="1.8"/></svg>
<div class="t" style="left:601.80px;top:774.60px;font-size:15px;font-weight:400;color:#333333;letter-spacing:0.485px;">Sábado</div>
<div class="t" style="left:731.70px;top:774.60px;font-size:15px;font-weight:400;color:#333333;letter-spacing:0.525px;">Cerrado</div>
<div class="b" style="left:812.4px;top:764px;width:45.5px;height:38.5px;border:1.3px solid #3a5f8f;border-radius:2.5px"></div><svg class="b" style="left:812.4px;top:764px;" width="46" height="39" viewBox="0 0 46 39" fill="none"><line x1="13.5" y1="20" x2="31.2" y2="20" stroke="#2f5486" stroke-width="1.5"/><line x1="22.4" y1="11.3" x2="22.4" y2="28.6" stroke="#2f5486" stroke-width="1.5"/></svg>
<div class="t" style="left:600.80px;top:830.60px;font-size:15px;font-weight:400;color:#333333;letter-spacing:1.635px;">Domingo</div>
<div class="t" style="left:731.70px;top:830.60px;font-size:15px;font-weight:400;color:#333333;letter-spacing:0.525px;">Cerrado</div>
<div class="b" style="left:812.4px;top:820px;width:45.5px;height:38.5px;border:1.3px solid #3a5f8f;border-radius:2.5px"></div><svg class="b" style="left:812.4px;top:820px;" width="46" height="39" viewBox="0 0 46 39" fill="none"><line x1="13.5" y1="20" x2="31.2" y2="20" stroke="#2f5486" stroke-width="1.5"/><line x1="22.4" y1="11.3" x2="22.4" y2="28.6" stroke="#2f5486" stroke-width="1.5"/></svg>
<div class="b" style="left:577px;top:875px;width:846px;height:1px;background:#dcdcdc"></div>
<div class="b" style="left:1171px;top:896px;width:113px;height:38px;border:1px solid #f0c4c4;border-radius:2px"></div>
<div class="t" style="left:1196.00px;top:906.80px;font-size:15px;font-weight:700;color:#c65f5b;letter-spacing:-0.076px;">Cancelar</div>
<div class="b" style="left:1291px;top:896px;width:109px;height:38px;background:#2e66b0;border-radius:2px"></div>
<div class="t" style="left:1316.30px;top:906.80px;font-size:15px;font-weight:700;color:#ffffff;letter-spacing:0.031px;">Guardar</div>
<div class="b" style="left:0px;top:1002px;width:2000px;height:1px;background:#fdfdfd"></div>
</body></html>
